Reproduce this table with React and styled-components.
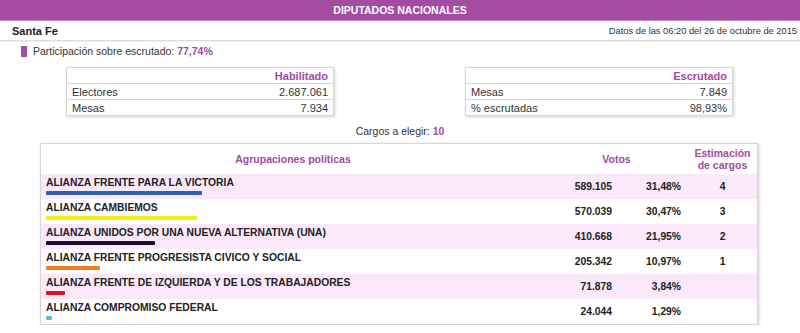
import React from "react";
import styled, { createGlobalStyle } from "styled-components";

const GlobalStyle = createGlobalStyle`
  body {
    margin: 0;
    background: #fff;
    font-family: "Liberation Sans", Arial, sans-serif;
    color: #333;
  }
`;

const Page = styled.div`
  width: 800px;
`;

const TitleBar = styled.div`
  height: 20px;
  background: #a44ca4;
  border-bottom: 1px solid #c48cc4;
  color: #fff;
  font-weight: bold;
  font-size: 10.5px;
  display: flex;
  align-items: center;
  justify-content: center;
`;

const PlaceRow = styled.div`
  display: flex;
  justify-content: space-between;
  align-items: center;
  height: 19px;
  padding: 0 3px 0 12px;
  border-bottom: 1px solid #dcdcdc;
  box-shadow: 0 1px 1px rgba(0, 0, 0, 0.06);
`;

const Place = styled.span`
  font-weight: bold;
  font-size: 11px;
  color: #222;
`;

const Stamp = styled.span`
  font-size: 9.3px;
  color: #333;
`;

const Participation = styled.div`
  display: flex;
  align-items: center;
  gap: 6px;
  padding: 3px 0 0 21px;
  height: 14px;
  font-size: 10.5px;
`;

const Marker = styled.span`
  width: 6px;
  height: 11px;
  background: #a44ca4;
`;

const Accent = styled.b`
  color: #9b4d9b;
`;

const SummaryRow = styled.div`
  display: flex;
  justify-content: space-between;
  padding: 9px 67px 0 66px;
`;

const SmallTable = styled.table`
  width: 268px;
  border-collapse: collapse;
  border: 1px solid #d6d6d6;
  box-shadow: 1px 1px 3px rgba(0, 0, 0, 0.18);
  font-size: 11px;
  td, th {
    padding: 0 5px;
    height: 15px;
    border-top: 1px solid #d6d6d6;
  }
  th {
    height: 15px;
    text-align: right;
    color: #a04ca0;
    font-weight: bold;
  }
`;

const Num = styled.td`
  text-align: right;
`;

const Cargos = styled.div`
  text-align: center;
  font-size: 10.5px;
  padding: 9px 0 0;
  height: 17px;
`;

const MainTable = styled.table`
  margin: 1px 0 0 40px;
  width: 718px;
  border-collapse: collapse;
  border: 1px solid #d6d6d6;
  box-shadow: 1px 1px 3px rgba(0, 0, 0, 0.2);
  font-size: 10.3px;
  font-weight: bold;
  color: #222;
`;

const Head = styled.th`
  height: 30px;
  padding: 0;
  color: #a04ca0;
  font-size: 10.5px;
  text-align: center;
  line-height: 12px;
  vertical-align: middle;
`;

const Row = styled.tr`
  height: 25px;
  background: ${(p) => (p.$odd ? "#fbe8fb" : "#fff")};
`;

const NameCell = styled.td`
  width: 499px;
  padding: 3px 0 0 5px;
  vertical-align: top;
`;

const Bar = styled.div`
  margin-top: 3px;
  height: 4px;
  border-radius: 1px;
  background: ${(p) => p.$color};
`;

const VotesCell = styled.td`
  width: 66px;
  padding-right: 5px;
  text-align: right;
`;

const PctCell = styled.td`
  width: 63px;
  padding-right: 7px;
  text-align: right;
`;

const SeatsCell = styled.td`
  text-align: center;
`;

const parties = [
  { name: "ALIANZA FRENTE PARA LA VICTORIA", votes: "589.105", pct: "31,48%", p: 31.48, seats: "4", color: "#2f5fb0" },
  { name: "ALIANZA CAMBIEMOS", votes: "570.039", pct: "30,47%", p: 30.47, seats: "3", color: "#f3ef10" },
  { name: "ALIANZA UNIDOS POR UNA NUEVA ALTERNATIVA (UNA)", votes: "410.668", pct: "21,95%", p: 21.95, seats: "2", color: "#1b1030" },
  { name: "ALIANZA FRENTE PROGRESISTA CIVICO Y SOCIAL", votes: "205.342", pct: "10,97%", p: 10.97, seats: "1", color: "#f07f22" },
  { name: "ALIANZA FRENTE DE IZQUIERDA Y DE LOS TRABAJADORES", votes: "71.878", pct: "3,84%", p: 3.84, seats: "", color: "#e0101c" },
  { name: "ALIANZA COMPROMISO FEDERAL", votes: "24.044", pct: "1,29%", p: 1.29, seats: "", color: "#5bbac2" },
];

export default function App() {
  return (
    <Page>
      <GlobalStyle />
      <TitleBar>DIPUTADOS NACIONALES</TitleBar>
      <PlaceRow>
        <Place>Santa Fe</Place>
        <Stamp>Datos de las 06:20 del 26 de octubre de 2015</Stamp>
      </PlaceRow>
      <Participation>
        <Marker />
        <span>
          Participación sobre escrutado: <Accent>77,74%</Accent>
        </span>
      </Participation>
      <SummaryRow>
        <SmallTable>
          <tbody>
            <tr>
              <th></th>
              <th>Habilitado</th>
            </tr>
            <tr>
              <td>Electores</td>
              <Num>2.687.061</Num>
            </tr>
            <tr>
              <td>Mesas</td>
              <Num>7.934</Num>
            </tr>
          </tbody>
        </SmallTable>
        <SmallTable>
          <tbody>
            <tr>
              <th></th>
              <th>Escrutado</th>
            </tr>
            <tr>
              <td>Mesas</td>
              <Num>7.849</Num>
            </tr>
            <tr>
              <td>% escrutadas</td>
              <Num>98,93%</Num>
            </tr>
          </tbody>
        </SmallTable>
      </SummaryRow>
      <Cargos>
        Cargos a elegir: <Accent>10</Accent>
      </Cargos>
      <MainTable>
        <tbody>
          <tr>
            <Head>Agrupaciones políticas</Head>
            <Head colSpan={2}>Votos</Head>
            <Head>
              Estimación
              <br />
              de cargos
            </Head>
          </tr>
          {parties.map((x, i) => (
            <Row key={x.name} $odd={i % 2 === 0}>
              <NameCell>
                {x.name}
                <Bar $color={x.color} style={{ width: `${x.p * 4.96}px` }} />
              </NameCell>
              <VotesCell>{x.votes}</VotesCell>
              <PctCell>{x.pct}</PctCell>
              <SeatsCell>{x.seats}</SeatsCell>
            </Row>
          ))}
        </tbody>
      </MainTable>
    </Page>
  );
}
